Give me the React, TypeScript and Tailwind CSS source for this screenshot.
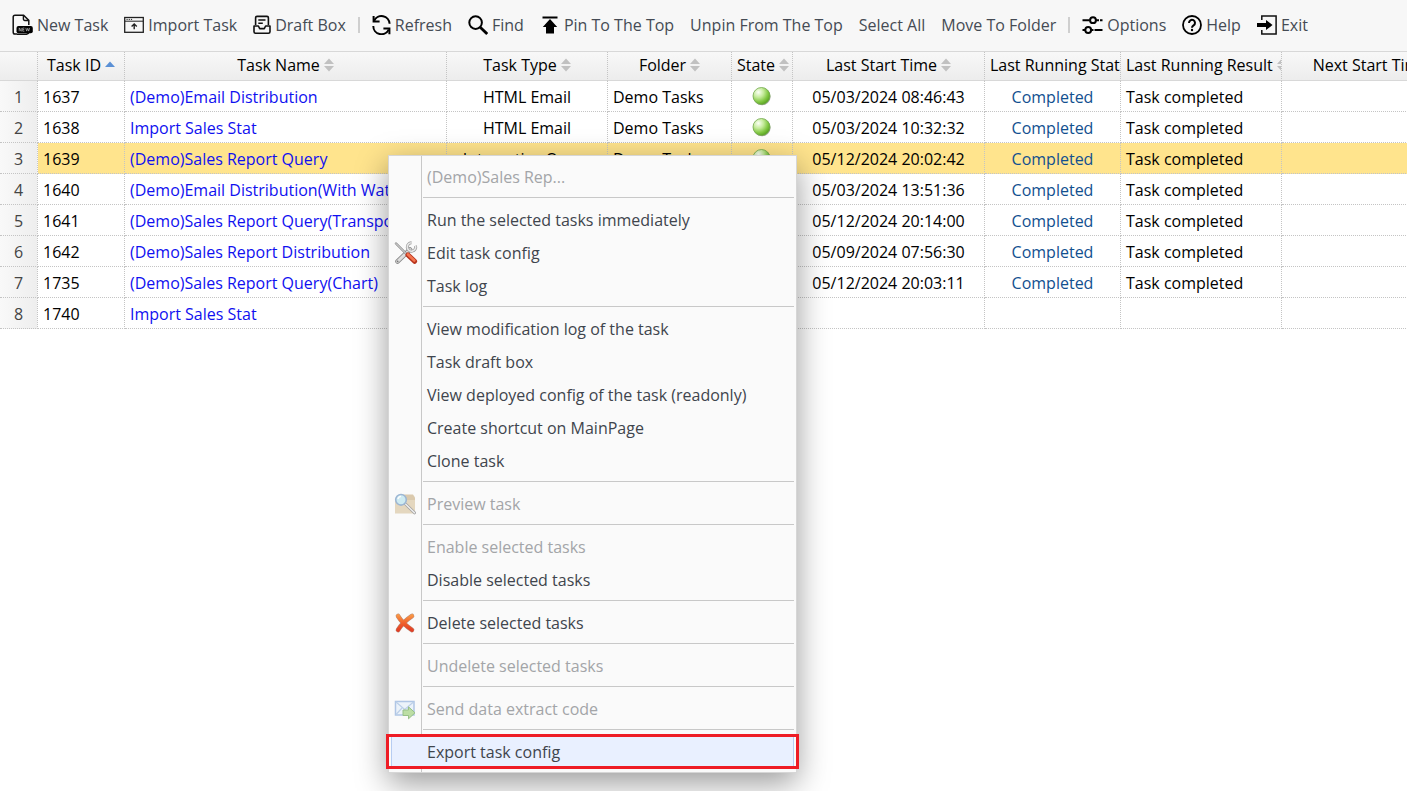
import { useState } from 'react';
import type { ReactNode } from 'react';
import clsx from 'clsx';

type Align = 'left' | 'center';

interface Column {
  key: string;
  label: string;
  width: string;
  align: Align;
}

interface Task {
  id: string;
  name: string;
  type: string;
  folder: string;
  lastStart: string;
  state: string;
  result: string;
}

const COLUMNS: Column[] = [
  { key: 'id', label: 'Task ID', width: 'w-[87px]', align: 'left' },
  { key: 'name', label: 'Task Name', width: 'w-[322px]', align: 'left' },
  { key: 'type', label: 'Task Type', width: 'w-[161px]', align: 'center' },
  { key: 'folder', label: 'Folder', width: 'w-[124px]', align: 'left' },
  { key: 'enabled', label: 'State', width: 'w-[61px]', align: 'center' },
  { key: 'lastStart', label: 'Last Start Time', width: 'w-[192px]', align: 'center' },
  { key: 'state', label: 'Last Running State', width: 'w-[136px]', align: 'center' },
  { key: 'result', label: 'Last Running Result', width: 'w-[161px]', align: 'left' },
  { key: 'next', label: 'Next Start Time', width: 'w-[192px]', align: 'center' },
];

const DONE = { state: 'Completed', result: 'Task completed' };

const TASKS: Task[] = [
  { id: '1637', name: '(Demo)Email Distribution', type: 'HTML Email', folder: 'Demo Tasks', lastStart: '05/03/2024 08:46:43', ...DONE },
  { id: '1638', name: 'Import Sales Stat', type: 'HTML Email', folder: 'Demo Tasks', lastStart: '05/03/2024 10:32:32', ...DONE },
  { id: '1639', name: '(Demo)Sales Report Query', type: 'Interactive Query', folder: 'Demo Tasks', lastStart: '05/12/2024 20:02:42', ...DONE },
  { id: '1640', name: '(Demo)Email Distribution(With Watermark)', type: 'HTML Email', folder: 'Demo Tasks', lastStart: '05/03/2024 13:51:36', ...DONE },
  { id: '1641', name: '(Demo)Sales Report Query(Transpose)', type: 'Interactive Query', folder: 'Demo Tasks', lastStart: '05/12/2024 20:14:00', ...DONE },
  { id: '1642', name: '(Demo)Sales Report Distribution', type: 'HTML Email', folder: 'Demo Tasks', lastStart: '05/09/2024 07:56:30', ...DONE },
  { id: '1735', name: '(Demo)Sales Report Query(Chart)', type: 'Interactive Query', folder: 'Demo Tasks', lastStart: '05/12/2024 20:03:11', ...DONE },
  { id: '1740', name: 'Import Sales Stat', type: 'HTML Email', folder: 'Demo Tasks', lastStart: '', state: '', result: '' },
];

/* ---------- toolbar icons ---------- */

function NewTaskIcon() {
  return (
    <svg width="21" height="22" viewBox="0 0 21 22" fill="none" aria-hidden="true">
      <path d="M5 20H3a1.800 1.800 0 0 1-1.800-1.800V3A1.800 1.800 0 0 1 3 1.200h8.600l5.200 5.200V11" stroke="#111" strokeWidth="1.500" />
      <path d="M11.400 1.500v3.600a1.400 1.400 0 0 0 1.400 1.400h4" stroke="#111" strokeWidth="1.400" />
      <rect x="4.500" y="12" width="16.300" height="7.200" rx="2" fill="#000" />
      <path d="M7.200 17.300v-3.400l2 3.400v-3.400M12.400 14h-1.700v3.200h1.700M10.800 15.600h1.400M13.800 13.900l.9 3.200 1-2.800 1 2.800.9-3.200" stroke="#bbb" strokeWidth=".7" />
      <path d="M5 20.200h9.500l2.500-1.200" stroke="#111" strokeWidth="1.400" />
    </svg>
  );
}

function ImportIcon() {
  return (
    <svg width="20" height="18" viewBox="0 0 20 18" fill="none" stroke="#222" aria-hidden="true">
      <rect x=".7" y="1.500" width="18.600" height="14.800" strokeWidth="1.300" />
      <path d="M1 5.200h18" strokeWidth="1" />
      <path d="M2.500 3.400h1.200M4.700 3.400h1.200M6.900 3.400h1.200" strokeWidth="1" />
      <path d="M10.200 13.200V8.200M7.600 10.400l2.600-2.500 2.600 2.500" strokeWidth="1.400" />
    </svg>
  );
}

function DraftIcon() {
  return (
    <svg width="18" height="20" viewBox="0 0 18 20" fill="none" stroke="#111" strokeWidth="1.600" strokeLinejoin="round" aria-hidden="true">
      <path d="M2.600 10V2.800A1.400 1.400 0 0 1 4 1.400h10a1.400 1.400 0 0 1 1.400 1.400V10" />
      <path d="M5.300 5h7.200M5.300 8.200h4.500" strokeWidth="1.400" />
      <path d="M1 11h4.400l1.300 2.600h4.600L12.600 11H17v5.700a1.600 1.600 0 0 1-1.600 1.600H2.600A1.600 1.600 0 0 1 1 16.700z" />
    </svg>
  );
}

function RefreshIcon() {
  return (
    <svg width="19" height="20" viewBox="0 0 19 20" fill="none" stroke="#000" strokeWidth="2" aria-hidden="true">
      <path d="M2.200 5.700A8.100 8.100 0 0 1 17.600 8.800" />
      <path d="M1.600 1v5.400h6" />
      <path d="M1.300 11a8.100 8.100 0 0 0 15.400 3.600" />
      <path d="M17.400 19.200v-5.600h-6" />
    </svg>
  );
}

function FindIcon() {
  return (
    <svg width="20" height="20" viewBox="0 0 20 20" fill="none" stroke="#000" aria-hidden="true">
      <circle cx="7.600" cy="7.600" r="6.300" strokeWidth="2" />
      <path d="M12.200 12.200l7 6.800" strokeWidth="2.800" />
    </svg>
  );
}

function PinIcon() {
  return (
    <svg width="20" height="18" viewBox="-2 0 20 18" aria-hidden="true">
      <path d="M.5.500h15v2H.500zM8 3l7.200 8H12v6.500H4V11H.800z" fill="#000" />
    </svg>
  );
}

function OptionsIcon() {
  return (
    <svg width="21" height="20" viewBox="0 0 21 20" fill="none" stroke="#000" strokeWidth="2" aria-hidden="true">
      <path d="M.500 5.200h7.200M14 5.200h3M18 5.200h2.500M.500 15h2.600M9.500 15h2M12.500 15h8" />
      <circle cx="11" cy="5.200" r="2.900" />
      <circle cx="6.200" cy="15" r="2.900" />
    </svg>
  );
}

function HelpIcon() {
  return (
    <svg width="20" height="20" viewBox="0 0 20 20" fill="none" stroke="#000" strokeWidth="1.800" aria-hidden="true">
      <circle cx="10" cy="10" r="9" />
      <path d="M7 7.900a3 3 0 1 1 4.600 2.500c-1 .700-1.600 1.100-1.600 2.300" strokeWidth="2" />
      <circle cx="10" cy="15" r="1.200" fill="#000" stroke="none" />
    </svg>
  );
}

function ExitIcon() {
  return (
    <svg width="20" height="20" viewBox="0 0 20 20" fill="none" aria-hidden="true">
      <path d="M4.800 5V.900h14.300v18.200H4.800V15" stroke="#111" strokeWidth="1.500" />
      <path d="M0 8h9V5l6.500 5-6.500 5v-3H0z" fill="#000" />
    </svg>
  );
}

/* ---------- menu icons ---------- */

function ToolsIcon() {
  return (
    <svg width="24" height="24" viewBox="0 0 24 24" fill="none" strokeLinecap="round" aria-hidden="true">
      <path d="M3.500 20.500L16 8.500" stroke="#8b8b8b" strokeWidth="4.600" />
      <path d="M3.500 20.500L16 8.500" stroke="#dedede" strokeWidth="3" />
      <path d="M21.500 4.800a4.200 4.200 0 1 1-4-3" stroke="#999" strokeWidth="3" strokeLinecap="butt" />
      <path d="M21.500 4.800a4.200 4.200 0 1 1-4-3" stroke="#e8e8e8" strokeWidth="1.600" strokeLinecap="butt" />
      <path d="M2 2.500l11 11" stroke="#888" strokeWidth="2.400" />
      <path d="M2 2.500l11 11" stroke="#eee" strokeWidth="1" />
      <path d="M14 14l6.600 6.300" stroke="#b7331d" strokeWidth="5" />
      <path d="M14 13.500l6.300 6" stroke="#f4754f" strokeWidth="2.600" />
      <circle cx="3.600" cy="20.400" r=".9" fill="#777" />
    </svg>
  );
}

function PreviewIcon() {
  return (
    <svg width="22" height="22" viewBox="0 0 22 22" fill="none" opacity=".65" aria-hidden="true">
      <path d="M1 6l5-4.500h13l2 3V20H1z" fill="#c9b084" />
      <path d="M1 7h20v13.500H1z" fill="#d9c5a0" />
      <path d="M11.500 11l9 8.800" stroke="#777" strokeWidth="3" strokeLinecap="round" />
      <path d="M11.500 11l9 8.800" stroke="#eee" strokeWidth="1.300" strokeLinecap="round" />
      <circle cx="7" cy="6.800" r="5.300" fill="#b7e4ef" stroke="#6b93c0" strokeWidth="1.600" />
      <path d="M4 6.200a3.300 3.300 0 0 1 3-2.800" stroke="#fff" strokeWidth="1.400" />
    </svg>
  );
}

function DeleteIcon() {
  return (
    <svg width="22" height="22" viewBox="-1 -1 22 22" fill="none" strokeLinecap="round" aria-hidden="true">
      <defs>
        <linearGradient id="cross" x1="0" y1="0" x2="0" y2="20" gradientUnits="userSpaceOnUse">
          <stop offset="0" stopColor="#fba64b" />
          <stop offset=".5" stopColor="#f0602c" />
          <stop offset="1" stopColor="#dd3424" />
        </linearGradient>
      </defs>
      <path d="M3 3c3 5 8 10 14 14M17 3C11 7 6 12 3 17" stroke="#b98a78" strokeWidth="4.600" />
      <path d="M3 3c3 5 8 10 14 14M17 3C11 7 6 12 3 17" stroke="url(#cross)" strokeWidth="3.700" />
    </svg>
  );
}

function SendIcon() {
  return (
    <svg width="22" height="22" viewBox="0 0 22 22" fill="none" opacity=".6" aria-hidden="true">
      <rect x="1.500" y="3.500" width="18.500" height="13.500" fill="#e4effb" stroke="#7fa5d8" strokeWidth="1.500" />
      <path d="M2 4l8.700 7.500L19.500 4M2 16.500l6-6.500M19.500 16.500l-6-6.500" stroke="#93b4dd" strokeWidth="1.200" />
      <path d="M9 12h5.500V8.800l6.500 6-6.500 6v-3.300H9z" fill="#93cc6c" stroke="#589a3c" />
    </svg>
  );
}

/* ---------- table ---------- */

function SortArrows({ sorted }: { sorted: boolean }) {
  if (sorted) {
    return (
      <svg className="shrink-0" width="10" height="14" viewBox="0 0 10 14" aria-hidden="true">
        <path d="M0 9l5-5.500L10 9z" fill="#5b90d5" />
      </svg>
    );
  }
  return (
    <svg className="shrink-0" width="10" height="14" viewBox="0 0 10 14" fill="#c1c1c1" aria-hidden="true">
      <path d="M0 6l5-5.500L10 6zM0 8l5 5.500L10 8z" />
    </svg>
  );
}

function StateBall() {
  return (
    <svg className="mx-auto" width="20" height="20" viewBox="0 0 20 20" role="img" aria-label="Enabled">
      <defs>
        <radialGradient id="ball" cx=".32" cy=".28" r=".75">
          <stop offset="0" stopColor="#fbfff6" />
          <stop offset=".4" stopColor="#c5eb9b" />
          <stop offset=".75" stopColor="#82c844" />
          <stop offset="1" stopColor="#5ba422" />
        </radialGradient>
      </defs>
      <circle cx="10" cy="9.700" r="8.600" fill="#777" opacity=".6" />
      <circle cx="9.500" cy="9" r="8.500" fill="url(#ball)" stroke="#72a84d" strokeWidth=".8" />
    </svg>
  );
}

function Cell({ column, task }: { column: Column; task: Task }) {
  switch (column.key) {
    case 'id':
      return task.id;
    case 'name':
      return <a href="#task" className="text-[#1010f0]">{task.name}</a>;
    case 'type':
      return task.type;
    case 'folder':
      return task.folder;
    case 'enabled':
      return <StateBall />;
    case 'lastStart':
      return task.lastStart;
    case 'state':
      return task.state ? <a href="#log" className="text-[#12508f]">{task.state}</a> : null;
    case 'result':
      return task.result;
    default:
      return null;
  }
}

interface TaskTableProps {
  selectedId: string;
  onSelect: (id: string) => void;
}

function TaskTable({ selectedId, onSelect }: TaskTableProps) {
  const [sortKey, setSortKey] = useState('id');

  return (
    <div className="overflow-hidden">
      <table className="w-[1474px] table-fixed border-separate border-spacing-0 text-base leading-5 text-black">
        <colgroup>
          <col className="w-[38px]" />
          {COLUMNS.map((c) => (
            <col key={c.key} className={c.width} />
          ))}
        </colgroup>
        <thead>
          <tr className="h-[29px] bg-linear-to-b from-[#f8f8f8] to-[#ececec]">
            <th className="border-r border-b border-r-[#c4c4c4] border-b-[#d8d8d8] [border-right-style:dotted]" />
            {COLUMNS.map((c) => (
              <th
                key={c.key}
                className="overflow-hidden border-r border-b border-r-[#c4c4c4] border-b-[#d8d8d8] px-[5px] pb-0.5 font-normal [border-right-style:dotted]"
              >
                <button
                  type="button"
                  onClick={() => setSortKey(c.key)}
                  className="mx-auto flex min-w-full items-center justify-center gap-1 whitespace-nowrap"
                >
                  {c.label}
                  <SortArrows sorted={sortKey === c.key} />
                </button>
              </th>
            ))}
          </tr>
        </thead>
        <tbody>
          {TASKS.map((task, i) => (
            <tr
              key={task.id}
              onClick={() => onSelect(task.id)}
              className={clsx('h-[31px]', task.id === selectedId && 'bg-[#ffe48d]')}
            >
              <td className="border-r border-b border-dotted border-[#c4c4c4] bg-linear-to-r from-[#f9f9f9] to-[#eeeeee] pt-0.5 text-center text-[#444]">
                {i + 1}
              </td>
              {COLUMNS.map((c) => (
                <td
                  key={c.key}
                  className={clsx(
                    'overflow-hidden border-r border-b border-dotted border-[#c4c4c4] px-[5px] pt-0.5 whitespace-nowrap',
                    c.align === 'center' && 'text-center',
                  )}
                >
                  <Cell column={c} task={task} />
                </td>
              ))}
            </tr>
          ))}
        </tbody>
      </table>
    </div>
  );
}

/* ---------- toolbar ---------- */

function ToolButton({ icon, label }: { icon?: ReactNode; label: string }) {
  return (
    <button type="button" className="flex items-center gap-1 whitespace-nowrap">
      {icon}
      {label}
    </button>
  );
}

function Toolbar() {
  return (
    <div
      role="toolbar"
      className="flex h-[52px] items-center gap-4 overflow-hidden border-b border-[#d8d8d8] bg-[#f7f7f7] pb-0.5 pl-3 text-base leading-5 text-[#454b54]"
    >
      <ToolButton icon={<NewTaskIcon />} label="New Task" />
      <ToolButton icon={<ImportIcon />} label="Import Task" />
      <ToolButton icon={<DraftIcon />} label="Draft Box" />
      <div className="-ml-1 flex items-center gap-3">
        <span className="h-4 w-0.5 bg-[#cfcfcf]" />
        <ToolButton icon={<RefreshIcon />} label="Refresh" />
      </div>
      <ToolButton icon={<FindIcon />} label="Find" />
      <ToolButton icon={<PinIcon />} label="Pin To The Top" />
      <ToolButton label="Unpin From The Top" />
      <ToolButton label="Select All" />
      <ToolButton label="Move To Folder" />
      <div className="-ml-1 flex items-center gap-3">
        <span className="h-4 w-0.5 bg-[#cfcfcf]" />
        <ToolButton icon={<OptionsIcon />} label="Options" />
      </div>
      <ToolButton icon={<HelpIcon />} label="Help" />
      <ToolButton icon={<ExitIcon />} label="Exit" />
    </div>
  );
}

/* ---------- context menu ---------- */

interface MenuEntry {
  label: string;
  icon?: ReactNode;
  disabled?: boolean;
  active?: boolean;
}

const MENU: MenuEntry[][] = [
  [{ label: '(Demo)Sales Rep...', disabled: true }],
  [
    { label: 'Run the selected tasks immediately' },
    { label: 'Edit task config', icon: <ToolsIcon /> },
    { label: 'Task log' },
  ],
  [
    { label: 'View modification log of the task' },
    { label: 'Task draft box' },
    { label: 'View deployed config of the task (readonly)' },
    { label: 'Create shortcut on MainPage' },
    { label: 'Clone task' },
  ],
  [{ label: 'Preview task', icon: <PreviewIcon />, disabled: true }],
  [{ label: 'Enable selected tasks', disabled: true }, { label: 'Disable selected tasks' }],
  [{ label: 'Delete selected tasks', icon: <DeleteIcon /> }],
  [{ label: 'Undelete selected tasks', disabled: true }],
  [{ label: 'Send data extract code', icon: <SendIcon />, disabled: true }],
  [{ label: 'Export task config', active: true }],
];

function MenuItem({ entry }: { entry: MenuEntry }) {
  return (
    <button
      type="button"
      role="menuitem"
      disabled={entry.disabled}
      className={clsx(
        'relative flex h-[33px] w-full items-center border-x text-left',
        entry.disabled ? 'text-[#a3a5a8]' : 'text-[#3f454d]',
        entry.active ? 'border-[#b7cdf2] bg-[#e9f0ff]' : 'border-transparent',
      )}
    >
      <span className="flex w-[35px] shrink-0 items-center pl-0.5">{entry.icon}</span>
      {entry.label}
      {entry.active && (
        <span className="absolute -inset-x-[6px] -inset-y-px border-[3px] border-[#ee1c25]" />
      )}
    </button>
  );
}

function ContextMenu() {
  return (
    <div
      role="menu"
      className="absolute top-[155px] left-[388px] w-[409px] border border-[#d6d6d6] bg-[#fafafa] bg-[linear-gradient(90deg,transparent_32px,#c8c8c8_32px,#c8c8c8_33px,transparent_33px)] px-0.5 py-1 text-base leading-5 shadow-[0_10px_30px_rgba(0,0,0,0.4)]"
    >
      {MENU.map((group, i) => (
        <div key={group[0].label} role="group">
          {i > 0 && <div className="mt-1 mb-[5px] ml-8 h-px bg-[#c8c8c8]" />}
          {group.map((entry) => (
            <MenuItem key={entry.label} entry={entry} />
          ))}
        </div>
      ))}
    </div>
  );
}

export default function App() {
  const [selectedId, setSelectedId] = useState('1639');

  return (
    <div className="relative min-h-screen overflow-hidden bg-white font-['Open_Sans','Noto_Sans',sans-serif]">
      <Toolbar />
      <TaskTable selectedId={selectedId} onSelect={setSelectedId} />
      <ContextMenu />
    </div>
  );
}
